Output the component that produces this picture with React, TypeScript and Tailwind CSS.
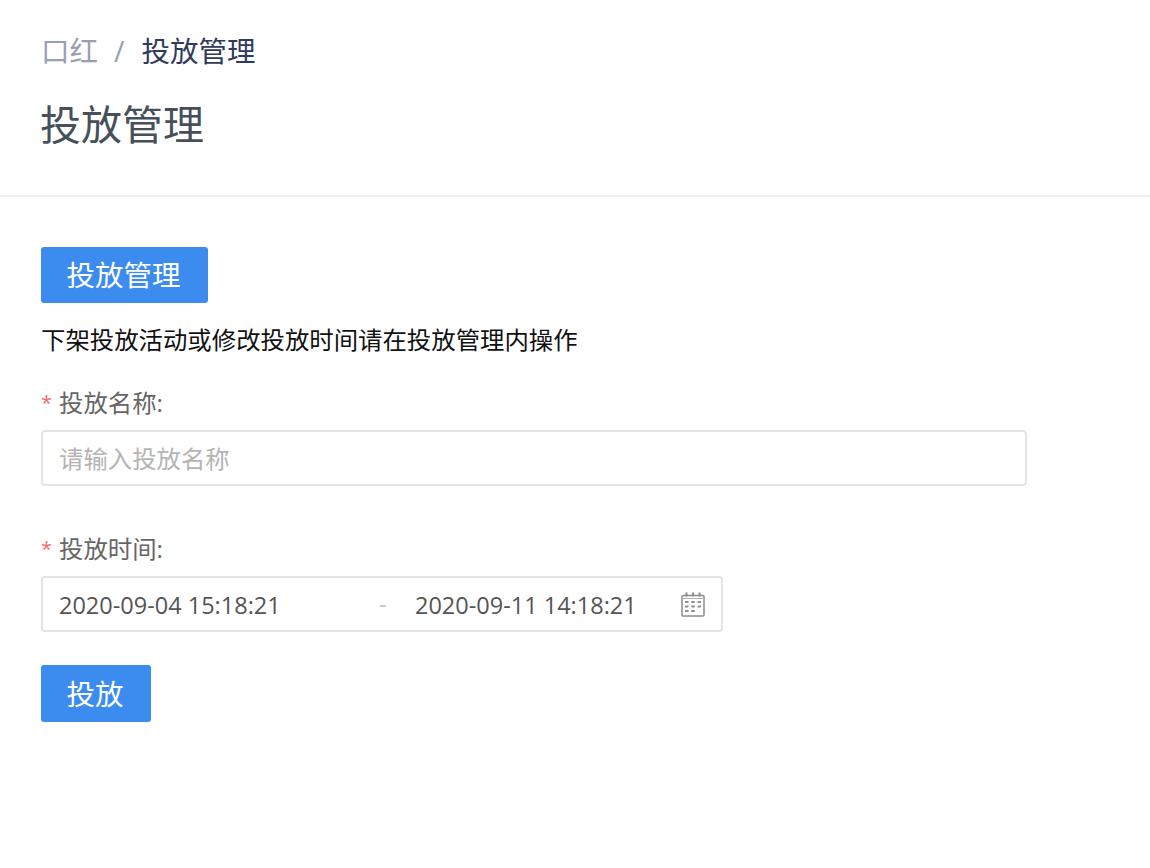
import React from 'react';

const font = "font-['Open_Sans','Noto_Sans_CJK_SC',sans-serif]";

function CalendarIcon() {
  return (
    <svg width="26" height="26" viewBox="0 0 26 26" fill="none" stroke="#8c8c8c" strokeWidth="1.5">
      <rect x="2" y="3.5" width="22" height="20.5" rx="1" />
      <path d="M2 6.500h22" strokeWidth="1" stroke="#b0b0b0" />
      <path d="M6.500 0.500v4M13 0.500v4M19.500 0.500v4" strokeWidth="2" />
      <path d="M5 10h3.500M11.250 10h3.500M17.500 10h3.500M5 14.500h3.500M11.250 14.500h3.500M17.500 14.500h3.500M5 19h3.500M11.250 19h3.500" strokeWidth="2.200" stroke="#8f8f8f" />
    </svg>
  );
}

function Label({ text }: { text: string }) {
  return (
    <div className="flex h-[34px] items-center text-[24.4px] text-[#666666]">
      <span className="mr-[8px] w-[10px] text-[20px] leading-none text-[#f56c6c]">*</span>
      {text}:
    </div>
  );
}

export default function App() {
  return (
    <div className={`${font} h-[868px] w-[1150px] overflow-hidden bg-white`}>
      <div className="h-[197px] border-b-2 border-[#f0f0f0] pl-[40px] pt-[31px]">
        <div className="flex h-[40px] items-center text-[28.500px]">
          <span className="ml-[1px] text-[#97a0b3]">口红</span>
          <span className="ml-[16px] mr-[17px] text-[#97a0b3]">/</span>
          <span className="text-[#303a5c]">投放管理</span>
        </div>
        <div className="mt-[23px] text-[41px] leading-[60px] text-[#46505a]">投放管理</div>
      </div>
      <div className="px-[41px] pt-[50px]">
        <button className="block h-[56px] w-[167px] rounded-[3px] bg-[#3c8cf0] pr-[2px] pt-[1px] text-[28.500px] text-white">投放管理</button>
        <div className="mt-[20px] h-[34px] text-[24.400px] leading-[34px] text-[#111]">下架投放活动或修改投放时间请在投放管理内操作</div>
        <div className="mt-[29px]">
          <Label text="投放名称" />
        </div>
        <div className="mt-[10px] flex h-[56px] w-[986px] items-center rounded-[4px] border-2 border-[#e4e4e4] pl-[16px] pt-[2px] text-[24.400px] text-[#b4b4b4]">
          请输入投放名称
        </div>
        <div className="mt-[46px]">
          <Label text="投放时间" />
        </div>
        <div className="mt-[10px] flex h-[56px] w-[682px] items-center rounded-[4px] border-2 border-[#e4e4e4] pt-[2px] text-[23.500px] text-[#555555]">
          <span className="ml-[16px] w-[320px] pt-[1px]">2020-09-04 15:18:21</span>
          <span className="w-[36px] text-[#c0c4cc]">-</span>
          <span className="w-[265px] pt-[1px]">2020-09-11 14:18:21</span>
          <CalendarIcon />
        </div>
        <button className="mt-[33px] block h-[57px] w-[110px] rounded-[3px] bg-[#3c8cf0] pr-[2px] pt-[1px] text-[28.500px] text-white">投放</button>
      </div>
    </div>
  );
}
